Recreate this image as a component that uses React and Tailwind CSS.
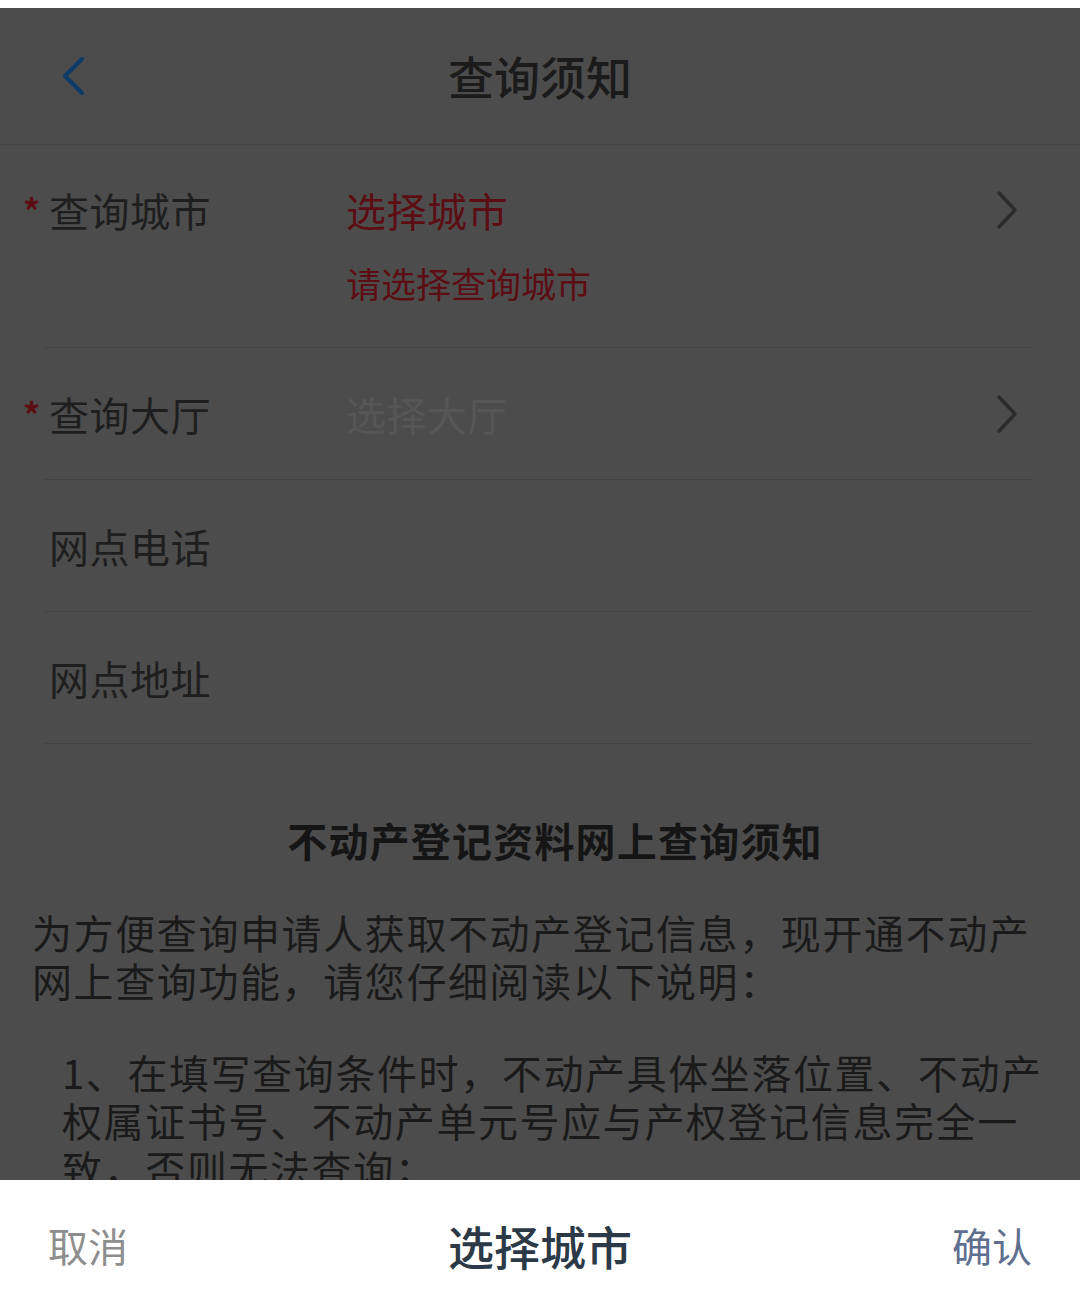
import React from "react";

const font = { fontFamily: '"Noto Sans CJK SC", "Noto Sans", sans-serif' };

function Chevron() {
  return (
    <svg width="24" height="40" viewBox="0 0 24 40" fill="none">
      <path d="M4 3 L20 20 L4 37" stroke="#2b2b2b" strokeWidth="3.5" strokeLinecap="round" strokeLinejoin="round" />
    </svg>
  );
}

function Row({ required, label, value, valueClass, error, chevron, first }) {
  return (
    <div className={`shrink-0 ml-[45px] mr-[48px] flex border-b border-[#434343] ${first ? "items-start pt-[41px] pb-[44px]" : "h-[132px] items-center"}`}>
      <div className="w-[301px] shrink-0 flex items-center text-[40px] leading-[48px] text-[#1e1e1e] tracking-[0.5px]">
        {required ? (
          <span className="-ml-[22px] w-[22px] text-[#5c0c13] text-[34px] leading-[48px] font-bold">*</span>
        ) : null}
        <span className="pl-[4px]">{label}</span>
      </div>
      <div className="flex-1 flex flex-col">
        <div className="flex items-center justify-between">
          <span className={`text-[40px] leading-[48px] tracking-[0.5px] ${valueClass}`}>{value}</span>
          {chevron ? (
            <span className="mr-[13px] flex items-center">
              <Chevron />
            </span>
          ) : null}
        </div>
        {error ? (
          <div className="mt-[29px] text-[35px] leading-[40px] text-[#5c0c13]">{error}</div>
        ) : null}
      </div>
    </div>
  );
}

export default function App() {
  return (
    <div style={font} className="w-[1080px] h-[1300px] flex flex-col overflow-hidden bg-white">
      <div className="h-[8px] bg-white shrink-0" />
      <div className="flex-1 min-h-0 overflow-hidden bg-[#4c4c4c] flex flex-col">
        <div className="h-[137px] shrink-0 border-b border-[#444444] flex items-center relative">
          <div className="pl-[60px] flex items-center">
            <svg width="26" height="40" viewBox="0 0 26 40" fill="none">
              <path d="M22 3 L5 20 L22 37" stroke="#0e3a68" strokeWidth="4" strokeLinecap="round" strokeLinejoin="round" />
            </svg>
          </div>
          <div className="absolute inset-0 flex items-center justify-center text-[46px] leading-[56px] text-[#1b1b1b] font-medium pb-[2px]">
            查询须知
          </div>
        </div>

        <Row first required label="查询城市" value="选择城市" valueClass="text-[#5c0c13]" error="请选择查询城市" chevron />
        <Row required label="查询大厅" value="选择大厅" valueClass="text-[#565656]" chevron />
        <Row label="网点电话" value="" valueClass="" />
        <Row label="网点地址" value="" valueClass="" />

        <div className="shrink-0 pt-[72px] text-center pl-[30px] text-[40px] leading-[48px] font-bold text-[#151515] tracking-[1.2px]">
          不动产登记资料网上查询须知
        </div>
        <div className="shrink-0 pl-[32px] mt-[44px] text-[40px] leading-[48px] text-[#1a1a1a] tracking-[1.6px] whitespace-nowrap">
          <div>为方便查询申请人获取不动产登记信息，现开通不动产</div>
          <div>网上查询功能，请您仔细阅读以下说明：</div>
        </div>
        <div className="shrink-0 pl-[62px] mt-[44px] text-[40px] leading-[48px] text-[#1a1a1a] tracking-[1.6px] whitespace-nowrap">
          <div>1、在填写查询条件时，不动产具体坐落位置、不动产</div>
          <div>权属证书号、不动产单元号应与产权登记信息完全一</div>
          <div>致，否则无法查询；</div>
        </div>
      </div>
      <div className="h-[120px] shrink-0 bg-white flex items-center justify-between px-[48px] pt-[10px] relative">
        <span className="text-[40px] leading-[48px] text-[#8e8e8e]">取消</span>
        <span className="absolute inset-0 pt-[10px] flex items-center justify-center text-[46px] leading-[56px] text-[#2c3947] font-medium">
          选择城市
        </span>
        <span className="text-[40px] leading-[48px] text-[#5f6f8e]">确认</span>
      </div>
    </div>
  );
}
